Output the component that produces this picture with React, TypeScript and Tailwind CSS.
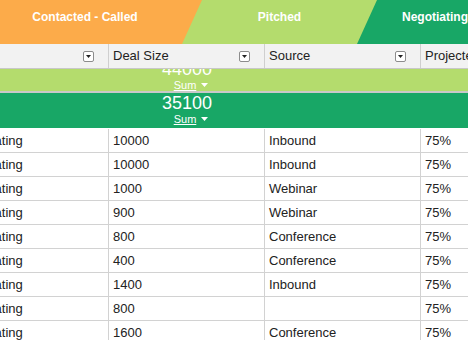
const stages = [
  { count: '112', label: 'Contacted - Called' },
  { count: '11', label: 'Pitched' },
  { count: '11', label: 'Negotiating' },
];

const columns = ['Stage', 'Deal Size', 'Source', 'Projected Close %'];

const rows = [
  { size: '10000', source: 'Inbound' },
  { size: '10000', source: 'Inbound' },
  { size: '1000', source: 'Webinar' },
  { size: '900', source: 'Webinar' },
  { size: '800', source: 'Conference' },
  { size: '400', source: 'Conference' },
  { size: '1400', source: 'Inbound' },
  { size: '800', source: '' },
  { size: '1600', source: 'Conference' },
];

function Caret({ color }: { color: string }) {
  return (
    <svg width="7" height="4" viewBox="0 0 7 4" className="shrink-0">
      <path d="M0 0h7L3.5 4z" fill={color} />
    </svg>
  );
}

function FilterButton() {
  return (
    <div className="flex h-[11px] w-[11px] items-center justify-center rounded-[2px] border border-[#8c8c8c] bg-white">
      <svg width="5" height="3" viewBox="0 0 5 3">
        <path d="M0 0h5L2.5 3z" fill="#222" />
      </svg>
    </div>
  );
}

function SumBlock({ value }: { value: string }) {
  return (
    <div className="flex">
      <div className="w-[156px] shrink-0" />
      <div className="flex w-[156px] shrink-0 flex-col items-center text-white">
        <div className="text-[18px] leading-[20px]">{value}</div>
        <div className="flex h-[12px] items-center gap-[5px] pl-[8px] text-[11px] leading-[12px]">
          <span className="underline">Sum</span>
          <Caret color="#fff" />
        </div>
      </div>
    </div>
  );
}

export default function App() {
  return (
    <div className="h-[340px] w-[468px] overflow-hidden bg-white font-['Liberation_Sans',Arial,sans-serif] text-[#222]">
      {/* stage funnel */}
      <div className="flex h-[44px] overflow-hidden text-white">
        <div className="ml-[-22px] flex w-[224px] shrink-0 flex-col items-center bg-[#fcab4a] pr-[10px]">
          <div className="mt-[-23px] text-[26px] font-bold leading-[28px]">{stages[0].count}</div>
          <div className="mt-[5px] text-[12px] font-bold leading-[14px]">{stages[0].label}</div>
        </div>
        <div className="ml-[-20px] flex w-[195px] shrink-0 flex-col items-center bg-[#b4dc6d] [clip-path:polygon(20px_0,100%_0,100%_100%,0_100%)]">
          <div className="mt-[-23px] text-[26px] font-bold leading-[28px]">{stages[1].count}</div>
          <div className="mt-[5px] text-[12px] font-bold leading-[14px]">{stages[1].label}</div>
        </div>
        <div className="ml-[-20px] flex w-[160px] shrink-0 flex-col items-center bg-[#18a766] pr-[4px] [clip-path:polygon(20px_0,100%_0,100%_100%,0_100%)]">
          <div className="mt-[-23px] text-[26px] font-bold leading-[28px]">{stages[2].count}</div>
          <div className="mt-[5px] text-[12px] font-bold leading-[14px]">{stages[2].label}</div>
        </div>
      </div>

      <div className="ml-[-47px] w-max">
        {/* header */}
        <div className="flex h-[25px] border-b border-[#c8c8c8] bg-[#f2f2f2] text-[13px]">
          {columns.map((c, i) => (
            <div
              key={c}
              className="flex w-[156px] shrink-0 items-center justify-between overflow-hidden whitespace-nowrap border-r border-[#cfcfcf] pl-[4px] pr-[14px]"
            >
              <span>{c}</span>
              {i < 3 && <FilterButton />}
            </div>
          ))}
        </div>

        {/* group summaries */}
        <div className="h-[22px] overflow-hidden bg-[#b4dc6d]">
          <div className="mt-[-10px]">
            <SumBlock value="44000" />
          </div>
        </div>
        <div className="h-[2px] bg-[#c9c9c9]" />
        <div className="h-[35px] bg-[#18a766]">
          <SumBlock value="35100" />
        </div>

        {/* data */}
        <div className="mt-[1px]">
          {rows.map((r, i) => (
            <div key={i} className="flex h-[24px] border-b border-[#d2d2d2] text-[13px] leading-[23px]">
              <div className="w-[156px] shrink-0 overflow-hidden whitespace-nowrap border-r border-[#d2d2d2] pl-[4px]">Negotiating</div>
              <div className="w-[156px] shrink-0 border-r border-[#d2d2d2] pl-[4px]">{r.size}</div>
              <div className="w-[156px] shrink-0 border-r border-[#d2d2d2] pl-[4px]">{r.source}</div>
              <div className="w-[156px] shrink-0 border-r border-[#d2d2d2] pl-[4px]">75%</div>
            </div>
          ))}
        </div>
      </div>
    </div>
  );
}
